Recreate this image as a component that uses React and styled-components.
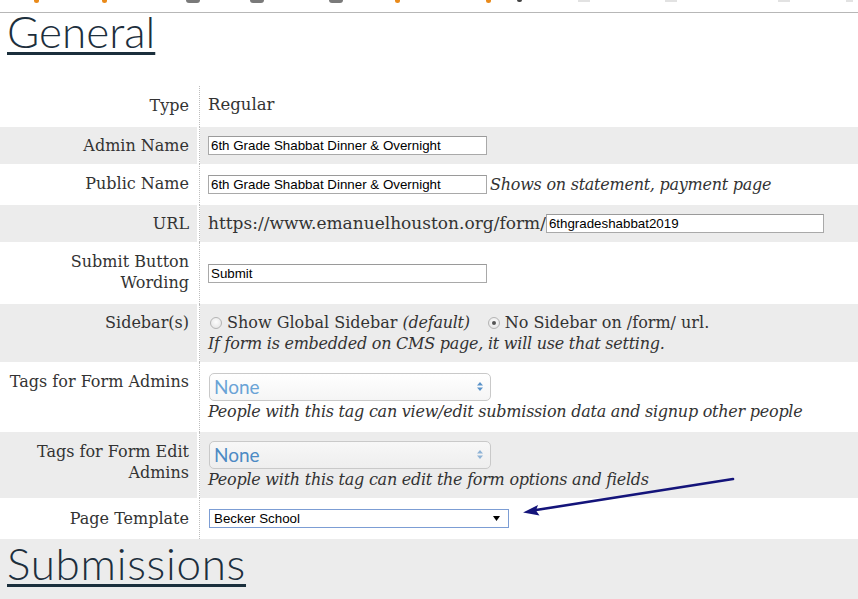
import React from "react";
import styled, { createGlobalStyle } from "styled-components";

const Global = createGlobalStyle`
  html, body { margin: 0; padding: 0; background: #fff; }
  body {
    width: 858px; height: 599px; overflow: hidden;
    font-family: "DejaVu Serif", serif; color: #333;
  }
`;

const Page = styled.div`
  position: relative;
  width: 858px;
  height: 599px;
  overflow: hidden;
  background: #fff;
`;

const Toolbar = styled.div`
  display: flex;
  align-items: flex-start;
  height: 12px;
  border-bottom: 1px solid #b7b7b7;
`;

const ToolBit = styled.span`
  display: block;
  flex: none;
  margin-left: ${(p) => p.$gap}px;
  width: ${(p) => p.$w}px;
  height: ${(p) => p.$h}px;
  background: ${(p) => p.$c};
  border-radius: ${(p) => p.$r};
`;

const Heading = styled.h2`
  margin: 0;
  padding: ${(p) => p.$pad};
  font-family: Lato, "Open Sans", sans-serif;
  font-weight: 300;
  font-size: 44px;
  line-height: 36px;
  color: #1d2f3d;
`;

const HeadLink = styled.span`
  letter-spacing: ${(p) => p.$ls || 0}px;
  text-decoration: underline;
  text-decoration-thickness: 3px;
  text-underline-offset: 4px;
  text-decoration-color: #1b2f3c;
`;

const Form = styled.div`
  margin-top: 37px;
  display: flex;
  flex-direction: column;
`;

const Row = styled.div`
  display: grid;
  grid-template-columns: 197px 3px 1fr;
  min-height: ${(p) => p.$h}px;
  background: ${(p) => (p.$alt ? "#ececec" : "#fff")};
`;

const Label = styled.div`
  text-align: right;
  white-space: nowrap;
  padding: ${(p) => p.$pt || 8}px 8px 0 0;
  font-size: 16px;
  line-height: 21px;
  color: #333;
  align-self: start;
`;

const Divider = styled.div`
  background: #fff;
  &::after {
    content: "";
    display: block;
    margin-left: 2px;
    height: 100%;
    border-left: 1px dotted #bdbdbd;
  }
`;

const Value = styled.div`
  display: flex;
  flex-direction: column;
  justify-content: ${(p) => (p.$top ? "flex-start" : "center")};
  padding: ${(p) => (p.$top ? "8px 0 0 8px" : "0 0 0 8px")};
  font-size: 16px;
  line-height: 21px;
  color: #333;
`;

const Line = styled.div`
  display: flex;
  align-items: center;
  white-space: nowrap;
  font-size: ${(p) => p.$size || 16}px;
`;

const TextInput = styled.input`
  box-sizing: border-box;
  width: ${(p) => p.$w}px;
  height: 19px;
  margin: 0;
  padding: 1px 2px;
  border: 1px solid #a9a9a9;
  border-top-color: #9a9a9a;
  font-family: "Liberation Sans", Arial, sans-serif;
  font-size: 13.333px;
  color: #000;
  background: #fff;
  outline: none;
`;

const Help = styled.span`
  font-style: italic;
  font-size: 16px;
  letter-spacing: -0.25px;
  color: #333;
  margin-left: ${(p) => p.$ml || 0}px;
`;

const Radio = styled.span`
  flex: none;
  box-sizing: border-box;
  width: 12px;
  height: 12px;
  margin: 1px 5px 0 2px;
  border-radius: 50%;
  border: 1px solid #b4b4b4;
  background: radial-gradient(circle at 50% 40%, #fdfdfd, #e0e0e0);
  display: flex;
  align-items: center;
  justify-content: center;
  &::after {
    content: "";
    width: 4px;
    height: 4px;
    border-radius: 50%;
    background: ${(p) => (p.$on ? "#555" : "transparent")};
  }
`;

const Em = styled.i`
  font-style: italic;
  letter-spacing: -0.25px;
`;

const Spacer = styled.span`
  display: inline-block;
  width: ${(p) => p.$w}px;
`;

const FancySelect = styled.div`
  box-sizing: border-box;
  width: 282px;
  height: 28px;
  margin-left: 1px;
  display: flex;
  align-items: center;
  justify-content: space-between;
  padding: 0 7px 0 4px;
  border: 1px solid #c9c9c9;
  border-radius: 5px;
  background: ${(p) =>
    p.$muted ? "linear-gradient(#f7f7f7, #eeeeee)" : "linear-gradient(#ffffff, #f5f5f5)"};
  font-family: Lato, "Open Sans", sans-serif;
  font-size: 19px;
  color: ${(p) => (p.$muted ? "#4c8ac4" : "#6aa3d6")};
`;

const NativeSelect = styled.div`
  box-sizing: border-box;
  width: 300px;
  height: 19px;
  margin-left: 1px;
  display: flex;
  align-items: center;
  justify-content: space-between;
  padding: 0 8px 0 4px;
  border: 1px solid #7c9dd4;
  background: #fff;
  font-family: "Liberation Sans", Arial, sans-serif;
  font-size: 13.333px;
  color: #000;
`;

const Overlay = styled.svg`
  position: absolute;
  left: 0;
  top: 0;
  pointer-events: none;
`;

const Section = styled.div`
  background: #ececec;
  flex: 1;
`;

const Column = styled.div`
  display: flex;
  flex-direction: column;
  height: 599px;
`;

const UpDown = ({ color }) => (
  <svg width="6" height="9" viewBox="0 0 6 9">
    <path d="M0 3.5 L3 0 L6 3.5 Z M0 5.5 L3 9 L6 5.5 Z" fill={color} />
  </svg>
);

const Caret = () => (
  <svg width="7" height="5" viewBox="0 0 7 5">
    <path d="M0 0 H7 L3.5 5 Z" fill="#000" />
  </svg>
);

const bits = [
  { gap: 34, w: 5, h: 3, c: "#e98a1a", r: "0 0 3px 3px" },
  { gap: 63, w: 5, h: 3, c: "#e98a1a", r: "0 0 3px 3px" },
  { gap: 79, w: 14, h: 3, c: "#7a7a7a", r: "0 0 5px 5px" },
  { gap: 50, w: 14, h: 3, c: "#7a7a7a", r: "0 0 5px 5px" },
  { gap: 65, w: 14, h: 3, c: "#7a7a7a", r: "0 0 5px 5px" },
  { gap: 52, w: 5, h: 3, c: "#e98a1a", r: "0 0 3px 3px" },
  { gap: 86, w: 5, h: 3, c: "#e98a1a", r: "0 0 3px 3px" },
  { gap: 26, w: 5, h: 2, c: "#444", r: "0 0 2px 2px" },
  { gap: 56, w: 12, h: 2, c: "#e2e2e2", r: "0" },
  { gap: 75, w: 12, h: 2, c: "#e2e2e2", r: "0" },
  { gap: 101, w: 12, h: 2, c: "#e2e2e2", r: "0" },
  { gap: 56, w: 7, h: 2, c: "#e2e2e2", r: "0" },
];

export default function App() {
  return (
    <Page>
      <Global />
      <Column>
        <Toolbar>
          {bits.map((b, i) => (
            <ToolBit key={i} $gap={b.gap} $w={b.w} $h={b.h} $c={b.c} $r={b.r} />
          ))}
        </Toolbar>
        <Heading $pad="0 0 0 7px">
          <HeadLink>General</HeadLink>
        </Heading>
        <Form>
          <Row $h={41}>
            <Label $pt={9}>Type</Label>
            <Divider />
            <Value $top>
              <Line $size={16.5}>Regular</Line>
            </Value>
          </Row>
          <Row $h={37} $alt>
            <Label>Admin Name</Label>
            <Divider />
            <Value>
              <Line>
                <TextInput $w={279} defaultValue="6th Grade Shabbat Dinner & Overnight" />
              </Line>
            </Value>
          </Row>
          <Row $h={41}>
            <Label $pt={9}>Public Name</Label>
            <Divider />
            <Value>
              <Line>
                <TextInput $w={279} defaultValue="6th Grade Shabbat Dinner & Overnight" />
                <Help $ml={3}>Shows on statement, payment page</Help>
              </Line>
            </Value>
          </Row>
          <Row $h={37} $alt>
            <Label>URL</Label>
            <Divider />
            <Value>
              <Line $size={17}>
                https://www.emanuelhouston.org/form/
                <TextInput $w={278} defaultValue="6thgradeshabbat2019" />
              </Line>
            </Value>
          </Row>
          <Row $h={62}>
            <Label $pt={9}>
              Submit Button
              <br />
              Wording
            </Label>
            <Divider />
            <Value>
              <Line>
                <TextInput $w={279} defaultValue="Submit" />
              </Line>
            </Value>
          </Row>
          <Row $h={58} $alt>
            <Label>Sidebar(s)</Label>
            <Divider />
            <Value>
              <Line>
                <Radio />
                Show Global Sidebar&nbsp;<Em>(default)</Em>
                <Spacer $w={16} />
                <Radio $on />
                No Sidebar on /form/ url.
              </Line>
              <Line>
                <Help>If form is embedded on CMS page, it will use that setting.</Help>
              </Line>
            </Value>
          </Row>
          <Row $h={70}>
            <Label $pt={9}>Tags for Form Admins</Label>
            <Divider />
            <Value>
              <FancySelect>
                None
                <UpDown color="#5b93c9" />
              </FancySelect>
              <Line>
                <Help>People with this tag can view/edit submission data and signup other people</Help>
              </Line>
            </Value>
          </Row>
          <Row $h={66} $alt>
            <Label $pt={9}>
              Tags for Form Edit
              <br />
              Admins
            </Label>
            <Divider />
            <Value>
              <FancySelect $muted>
                None
                <UpDown color="#8fb3d6" />
              </FancySelect>
              <Line>
                <Help>People with this tag can edit the form options and fields</Help>
              </Line>
            </Value>
          </Row>
          <Row $h={41}>
            <Label $pt={10}>Page Template</Label>
            <Divider />
            <Value>
              <NativeSelect>
                Becker School
                <Caret />
              </NativeSelect>
            </Value>
          </Row>
        </Form>
        <Section>
          <Heading $pad="6px 0 0 7px">
            <HeadLink $ls={0.7}>Submissions</HeadLink>
          </Heading>
        </Section>
      </Column>
      <Overlay width="858" height="599" viewBox="0 0 858 599">
        <line x1="733" y1="479" x2="536" y2="510" stroke="#14147a" strokeWidth="2.6" strokeLinecap="round" />
        <path d="M523 512.5 L538 505 L536 510.5 L539.5 515.5 Z" fill="#14147a" />
      </Overlay>
    </Page>
  );
}
